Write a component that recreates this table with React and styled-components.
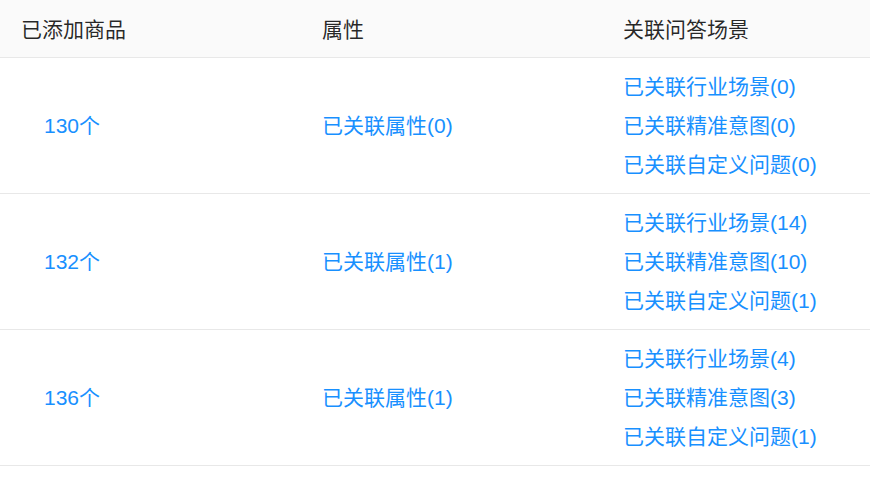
import React from "react";
import styled, { createGlobalStyle } from "styled-components";

const rows = [
  { count: 130, attr: 0, scene: 0, intent: 0, custom: 0 },
  { count: 132, attr: 1, scene: 14, intent: 10, custom: 1 },
  { count: 136, attr: 1, scene: 4, intent: 3, custom: 1 },
];

export default function App() {
  return (
    <>
      <Global />
      <Table>
        <HeadRow>
          <HeadCell>已添加商品</HeadCell>
          <HeadCell>属性</HeadCell>
          <HeadCell>关联问答场景</HeadCell>
        </HeadRow>
        {rows.map((r, i) => (
          <Row key={i}>
            <Cell $indent $lift>
              <Link>{r.count}个</Link>
            </Cell>
            <Cell $lift>
              <Link>已关联属性({r.attr})</Link>
            </Cell>
            <Cell>
              <LinkList>
                <Link>已关联行业场景({r.scene})</Link>
                <Link>已关联精准意图({r.intent})</Link>
                <Link>已关联自定义问题({r.custom})</Link>
              </LinkList>
            </Cell>
          </Row>
        ))}
      </Table>
    </>
  );
}

const Global = createGlobalStyle`
  body {
    margin: 0;
    background: #fff;
    font-family: "Liberation Sans", "Noto Sans CJK SC", sans-serif;
  }
`;

const Table = styled.div`
  width: 870px;
  font-size: 21px;
`;

const HeadRow = styled.div`
  display: grid;
  grid-template-columns: 301px 301px 1fr;
  height: 57px;
  align-items: center;
  background: #fafafa;
  border-bottom: 1px solid #e8e8e8;
  color: rgba(0, 0, 0, 0.85);
`;

const HeadCell = styled.div`
  padding-left: 21px;
  padding-bottom: 2px;
`;

const Row = styled.div`
  display: grid;
  grid-template-columns: 301px 301px 1fr;
  height: 135px;
  align-items: center;
  border-bottom: 1px solid #e8e8e8;
`;

const Cell = styled.div`
  padding-left: ${(p) => (p.$indent ? "44px" : "21px")};
  padding-bottom: ${(p) => (p.$lift ? "3px" : "0")};
`;

const LinkList = styled.div`
  display: flex;
  flex-direction: column;
  line-height: 39px;
`;

const Link = styled.a`
  color: #1890ff;
  cursor: pointer;
  text-decoration: none;
`;
